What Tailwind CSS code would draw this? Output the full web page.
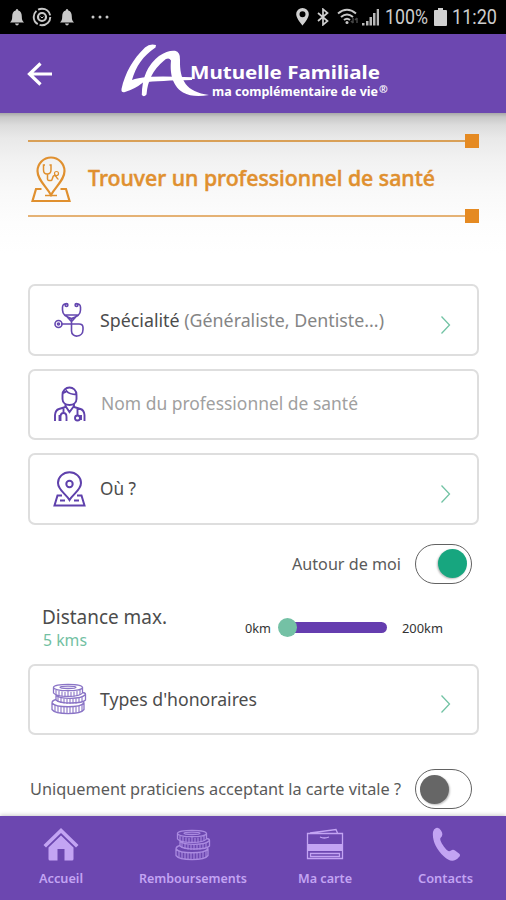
<!DOCTYPE html>
<html lang="fr">
<head>
<meta charset="utf-8">
<title>La Mutuelle Familiale</title>
<script src="https://cdn.jsdelivr.net/npm/@tailwindcss/browser@4"></script>
</head>
<body class="bg-white">
<svg class="hidden">
  <symbol id="coins" viewBox="0 0 36 32">
    <g fill="none" stroke="currentColor" stroke-width="1.300">
      <ellipse cx="17" cy="4.500" rx="14.500" ry="3.200"/><ellipse cx="17" cy="4.300" rx="8" ry="1.200"/>
      <path d="M2.500 4.500v5.500c3 4.500 26 4.500 29 0v-5.500M5 12v5c4 4 26 4 29.500 0v-5.500q0-1.800-3-2M5 12.500c5 4 25 4 29.500-1M1 20v6.500c4 5.500 28 5.500 32 0v-6.500M1 20c4 5 28 5 32 0M1 20q0-2.500 4-3.500M33 20q0-1.500-1.500-2"/>
      <path stroke-width="1.100" d="M5 7v5M8 8v5M11 8.500v5M14 9v5M17 8v5.500M20 9v5M23 8.500v5M26 8v5M29 7v5M7 14v5M10 15v5M13 15.500v5M16 16v5M19 16v5M22 15.500v5M25 15.500v5M28 15v5M31 14v5M4 22v6M7 23v6M10 24v6M13 24v6M16 24v6M19 24v6M22 24v6M25 24v5.500M28 23v6M31 22v6"/>
    </g>
  </symbol>
  <symbol id="chev" viewBox="0 0 12 20"><path d="M1.500 1.500l8 8.500-8 8.500" fill="none" stroke="#72c3a4" stroke-width="1.300"/></symbol>
  <symbol id="bell" viewBox="0 0 14 17"><path fill="#c8c8c8" d="M7 0q1.300 0 1.300 1.500C11 2.300 11.800 4.500 11.800 7.500c0 3 .5 4.500 2.200 6H0c1.700-1.500 2.200-3 2.200-6 0-3 .8-5.200 3.500-6Q5.700 0 7 0zM5 14.500h4q-.5 2-2 2t-2-2z"/></symbol>
</svg>
<div class="flex h-[900px] w-[506px] flex-col overflow-hidden bg-white font-['Noto_Sans',sans-serif] text-[#4c4c4c]">

  <div class="flex h-[34px] shrink-0 items-center bg-black pl-[10px] pr-[8px] text-[#cdcdcd]">
    <svg class="h-[17px] w-[14px]"><use href="#bell"/></svg>
    <svg class="ml-[8px] h-[20px] w-[20px]" viewBox="0 0 20 20" fill="none" stroke="#c8c8c8"><circle cx="10" cy="10" r="8.300" stroke-width="1.900" stroke-dasharray="15.400 2"/><circle cx="10" cy="10" r="4" stroke-width="2.200"/><path d="M8.500 9.500l1.500 1.500 1.500-1.500" stroke-width="1"/></svg>
    <svg class="ml-[8px] h-[17px] w-[14px]"><use href="#bell"/></svg>
    <svg class="ml-[17px] h-[4px] w-[18px]" fill="#c8c8c8"><circle cx="2" cy="2" r="1.500"/><circle cx="9" cy="2" r="1.500"/><circle cx="16" cy="2" r="1.500"/></svg>
    <svg class="ml-auto h-[18px] w-[13px]" viewBox="0 0 13 18"><path fill="#d0d0d0" fill-rule="evenodd" d="M6.500 0a6.300 6.300 0 0 1 6.300 6.300C12.800 10.500 6.500 17.500 6.500 17.500S.2 10.500.2 6.300A6.300 6.300 0 0 1 6.500 0zm0 3.300a3 3 0 1 0 0 6 3 3 0 0 0 0-6z"/></svg>
    <svg class="ml-[8px] h-[18px] w-[12px]" viewBox="0 0 12 18" fill="none" stroke="#d0d0d0" stroke-width="1.700"><path d="M1 5l9.500 8L6 16.800V1.200L10.500 5 1 13"/></svg>
    <svg class="ml-[8px] h-[18px] w-[23px]" viewBox="0 0 23 18" fill="none" stroke="#c8c8c8" stroke-width="2"><path d="M1 5.500q9-7.500 18 0M4 9q6-5 12 0M7 12q3-2.500 6 0"/><circle cx="10" cy="14.500" r="1.500" fill="#c8c8c8" stroke="none"/><path stroke="#444" stroke-width="1.500" d="M16 10v5M20 10v5M14 13l2 2M18 12l2-2"/></svg>
    <svg class="ml-[2px] h-[18px] w-[18px]" viewBox="0 0 18 18" fill="#b8b8b8"><path d="M0 15h2.500v2.500H0zM4 13h2.500v4.500H4zM7.500 9h2.500v8.500H7.500zM11 5h2.500v12.500H11zM14.700 1h2.300v16.500h-2.300z"/></svg>
    <svg class="ml-[5px] h-[26px] w-[44px] overflow-visible"><text x="0" y="20" font-family="Roboto, sans-serif" font-size="20" fill="#cdcdcd" textLength="43" lengthAdjust="spacingAndGlyphs">100%</text></svg>
    <svg class="ml-[5px] h-[18px] w-[13px]" viewBox="0 0 13 18"><path fill="#d0d0d0" d="M4 0h5v2h3q1 0 1 1v14q0 1-1 1H1q-1 0-1-1V3q0-1 1-1h3z"/></svg>
    <svg class="ml-[5px] h-[26px] w-[46px] overflow-visible"><text x="0" y="20" font-family="Roboto, sans-serif" font-size="20" fill="#cdcdcd" textLength="45" lengthAdjust="spacingAndGlyphs">11:20</text></svg>
  </div>

  <header class="flex h-[79px] shrink-0 bg-[#6c47b0] pl-[27px]">
    <svg class="mt-[28px] h-[24px] w-[26px]" viewBox="0 0 26 24" fill="none" stroke="#fff" stroke-width="3.200"><path d="M25 12H3M13.500 1.500L2.500 12l11 10.500"/></svg>
    <svg class="ml-[57px] mt-[1px] h-[75px] w-[290px] overflow-visible" viewBox="0 0 290 75" fill="#fff">
      <path d="M46 10Q40 8 35 12.500C23 24 15 38 11.500 54Q11 58 15 57Q25 54 33 47.500Q50 45.500 82 45L82 42.200Q50 41 38 42Q27 43 22 45C26 31 33 21 45.500 12.500Z"/>
      <path d="M31.800 60Q32 34 49 21Q58 15 65 15.800Q70.500 17 70 25C69.500 45 76 57 99 60Q83 63 73 57.500C61 50 60 36 61 25.500Q58.500 21.500 53.500 26Q38 39 36.500 59.500Q34 62.500 31.800 60Z"/>
      <text x="80" y="44" font-family="'Noto Sans', sans-serif" font-weight="700" font-size="18" textLength="190" lengthAdjust="spacingAndGlyphs">Mutuelle Familiale</text>
      <text x="102" y="60.500" font-family="'Noto Sans', sans-serif" font-weight="700" font-size="12" textLength="166" lengthAdjust="spacingAndGlyphs">ma complémentaire de vie</text>
      <text x="269" y="58" font-family="'Noto Sans', sans-serif" font-weight="700" font-size="10.500">®</text>
    </svg>
  </header>

  <main class="flex h-[703px] shrink-0 flex-col bg-[linear-gradient(to_bottom,#a8a8a8_0px,#c8c8c8_4px,#dcdcdc_12px,#e9e9e9_25px,#f2f2f2_48px,#f9f9f9_80px,#fdfdfd_110px,#fff_140px)] px-[28px]">
    <section class="mt-[20px] w-[451px]">
      <div class="flex h-[16px] items-center"><i class="h-[2px] grow bg-[#d9a057]"></i><i class="h-[14px] w-[14px] bg-[#e58a22]"></i></div>
      <div class="flex h-[59px] items-center">
        <svg class="ml-[3px] mt-[2px] h-[47px] w-[40px]" viewBox="0 0 40 47" fill="none" stroke="#e0902f" stroke-width="2.200">
          <path d="M20 39C15 30 6.500 24 6.500 15a13.500 13.500 0 0 1 27 0C33.500 24 25 30 20 39zM10.500 33H5L1.500 45h37L35 33h-5.500"/>
          <path stroke-width="1.500" d="M14 9h-1.500v5q0 4 3.700 4t3.800-4V9h-1.500M16.500 18v5q0 2 3.500 1.500c2 0 1-5 3.500-5s2 4 4 3.500M14 39.500h12"/><circle cx="25.500" cy="17.500" r="2" stroke-width="1.200"/>
        </svg>
        <h1 class="ml-[17px] mt-[1px]"><svg class="block h-[34px] w-[350px] overflow-visible"><text x="0" y="24" font-family="'Noto Sans', sans-serif" font-size="22" font-weight="500" fill="#e0902f" stroke="#e0902f" stroke-width=".5" textLength="347" lengthAdjust="spacingAndGlyphs">Trouver un professionnel de santé</text></svg></h1>
      </div>
      <div class="flex h-[15px] items-center"><i class="h-[2px] grow bg-[#e5b275]"></i><i class="h-[14px] w-[14px] bg-[#e58a22]"></i></div>
    </section>

    <div class="mt-[61px] flex w-[451px] flex-col gap-[13px]">
      <div class="flex h-[71.500px] items-center rounded-[7px] border-2 border-[#dedede] bg-white pl-[24px] pr-[25px]">
        <svg class="h-[36px] w-[32px]" viewBox="0 0 32 36" fill="none" stroke="#6548b0" stroke-width="1.600"><path d="M12.500 2.500Q9 1 8.500 5v3q0 6 9 8.500 9-2.500 9-8.500V5q-.5-4-4-2.500M11.500 13h12l-6 6.500zM17.500 16v13c0 7 11.500 7 11.500-1.500v-2Q29 22 25 22H7"/><circle cx="12.500" cy="3" r="1.400"/><circle cx="22.500" cy="3" r="1.400"/><circle cx="4.500" cy="22" r="3.500"/><circle cx="4.500" cy="22" r="1"/></svg>
        <svg class="ml-[14px] h-[28px] w-[290px] overflow-visible"><text x="0" y="21" font-family="'Noto Sans', sans-serif" font-size="18" fill="#4c4c4c" textLength="284" lengthAdjust="spacingAndGlyphs">Spécialité <tspan fill="#858585">(Généraliste, Dentiste...)</tspan></text></svg>
        <svg class="ml-auto mt-[10px] h-[20px] w-[12px]"><use href="#chev"/></svg>
      </div>
      <div class="flex h-[71.500px] items-center rounded-[7px] border-2 border-[#dedede] bg-white pl-[24px] pr-[25px]">
        <svg class="h-[36px] w-[32px]" viewBox="0 0 32 36" fill="none" stroke="#5f41ac" stroke-width="1.900"><path d="M8.500 9c0-10 14-10 14 0v4c0 8-14 8-14 0zM9 7q3-1 3.500-2 3 3.500 10 3.500M11.500 18v3L5 23q-3.500 1-4 6v6M20 18v3l6.500 2q3.500 1 4 6v6M11.500 20l4 6 4.500-6M6.500 35v-4q0-4 3-4t3 4v4M9.500 27v-5M23.500 22v7M5.500 29v6"/><circle cx="23.500" cy="32" r="2.500"/><path d="M27 29v5"/></svg>
        <svg class="ml-[14px] h-[28px] w-[290px] overflow-visible"><text x="1" y="20" font-family="'Noto Sans', sans-serif" font-size="18" fill="#a0a0a0" textLength="257" lengthAdjust="spacingAndGlyphs">Nom du professionnel de santé</text></svg>
      </div>
      <div class="flex h-[71.500px] items-center rounded-[7px] border-2 border-[#dedede] bg-white pl-[23px] pr-[25px]">
        <svg class="h-[36px] w-[33px]" viewBox="0 0 33 36" fill="none" stroke="#5f41ac" stroke-width="2"><path d="M16.500 29C13 23 5 19 5 12a11.500 10.800 0 0 1 23 0c0 7-8 11-11.500 17zM9 24.500H4.500L1.500 34.500h30l-3-10H24M7 29.500h5M21 29.500h5"/><circle cx="16.500" cy="13" r="3.200"/></svg>
        <svg class="ml-[14px] h-[28px] w-[290px] overflow-visible"><text x="0" y="20" font-family="'Noto Sans', sans-serif" font-size="18" fill="#4c4c4c" textLength="36" lengthAdjust="spacingAndGlyphs">Où ?</text></svg>
        <svg class="ml-auto mt-[10px] h-[20px] w-[12px]"><use href="#chev"/></svg>
      </div>
    </div>

    <div class="mt-[19px] flex h-[40px] w-[444px] items-center justify-end gap-[13px]">
      <svg class="h-[26px] w-[110px] overflow-visible"><text x="0" y="19" font-family="'Noto Sans', sans-serif" font-size="16.500" fill="#5a5a5a" textLength="109" lengthAdjust="spacingAndGlyphs">Autour de moi</text></svg>
      <div class="flex h-[40px] w-[57px] items-center justify-end rounded-full border border-[#626262] bg-white pr-[4px]"><i class="h-[29px] w-[29px] rounded-full bg-[#17a67f] shadow-[-1px_1px_2px_#bbb]"></i></div>
    </div>

    <div class="mt-[19px] flex h-[50px] items-center pl-[14px]">
      <svg class="h-[50px] w-[130px] overflow-visible" font-family="'Noto Sans', sans-serif"><text x="0" y="20.500" font-size="19" fill="#4c4c4c" textLength="125" lengthAdjust="spacingAndGlyphs">Distance max.</text><text x="1" y="43" font-size="16.500" fill="#72bfa2" textLength="44" lengthAdjust="spacingAndGlyphs">5 kms</text></svg>
      <svg class="ml-[73px] h-[20px] w-[27px] overflow-visible"><text x="0" y="14.500" font-family="'Noto Sans', sans-serif" font-size="13" fill="#333" textLength="26" lengthAdjust="spacingAndGlyphs">0km</text></svg>
      <div class="ml-[6px] flex h-[19px] w-[110px] items-center"><i class="z-10 h-[19px] w-[19px] shrink-0 rounded-full bg-[#74c1a5]"></i><i class="-ml-[5px] h-[11px] w-[95px] rounded-r-full bg-[#653daf]"></i></div>
      <svg class="ml-[14px] h-[20px] w-[44px] overflow-visible"><text x="0" y="14.500" font-family="'Noto Sans', sans-serif" font-size="13" fill="#333" textLength="41" lengthAdjust="spacingAndGlyphs">200km</text></svg>
    </div>

    <div class="mt-[11px] flex h-[71.500px] w-[451px] shrink-0 items-center rounded-[7px] border-2 border-[#dedede] bg-white pl-[21px] pr-[25px]">
      <svg class="h-[32px] w-[36px] text-[#8a74c6]"><use href="#coins"/></svg>
      <svg class="ml-[13px] h-[28px] w-[290px] overflow-visible"><text x="0" y="21" font-family="'Noto Sans', sans-serif" font-size="18" fill="#4c4c4c" textLength="157" lengthAdjust="spacingAndGlyphs">Types d'honoraires</text></svg>
      <svg class="ml-auto mt-[10px] h-[20px] w-[12px]"><use href="#chev"/></svg>
    </div>

    <div class="mt-[34px] flex h-[40px] w-[444px] shrink-0 items-center justify-between pl-[2px]">
      <svg class="h-[26px] w-[374px] overflow-visible"><text x="0" y="19" font-family="'Noto Sans', sans-serif" font-size="16.500" fill="#5a5a5a" textLength="371" lengthAdjust="spacingAndGlyphs">Uniquement praticiens acceptant la carte vitale ?</text></svg>
      <div class="flex h-[40px] w-[57px] items-center rounded-full border border-[#626262] bg-white pl-[4px]"><i class="h-[29px] w-[29px] rounded-full bg-[#666] shadow-[1px_1px_2px_#bbb]"></i></div>
    </div>
  </main>

  <nav class="grid h-[84px] shrink-0 grid-cols-[122px_142px_122px_120px] bg-[#6c47b0] pt-[11px] text-[#c3a4f3] shadow-[0_-1px_4px_#ccc]">
    <div class="flex flex-col items-center"><svg class="h-[36px] w-[36px]" viewBox="0 0 36 36" fill="currentColor"><path d="M18 1l17.500 17-2.500 2.500L18 6 3 20.500.5 18z"/><path d="M18 8.500L30.500 20.500V32q0 1.500-1.500 1.500h-7.500V22h-7v11.500H7q-1.500 0-1.500-1.500V20.500z"/></svg>
      <svg class="mt-[5px] h-[20px] w-[45px] overflow-visible"><text x="0" y="15" font-family="'Noto Sans', sans-serif" font-size="13" font-weight="600" fill="currentColor" textLength="44" lengthAdjust="spacingAndGlyphs">Accueil</text></svg></div>
    <div class="flex flex-col items-center"><svg class="mt-[2px] h-[32px] w-[36px] text-[#ab8be1]"><use href="#coins"/></svg>
      <svg class="mt-[7px] h-[20px] w-[109px] overflow-visible"><text x="0" y="15" font-family="'Noto Sans', sans-serif" font-size="13" font-weight="600" fill="currentColor" textLength="108" lengthAdjust="spacingAndGlyphs">Remboursements</text></svg></div>
    <div class="flex flex-col items-center"><svg class="h-[36px] w-[38px]" viewBox="0 0 38 36" fill="none" stroke="currentColor" stroke-width="1.300"><path d="M1.500 6.500h35v25h-35zM4 6l26-3.500 1.500 3.500M14 10q4 2 9 0"/><path fill="currentColor" stroke="none" d="M1.500 17h35v7h-35z"/><path d="M4.500 26.500h29v3h-29z"/></svg>
      <svg class="mt-[5px] h-[20px] w-[55px] overflow-visible"><text x="0" y="15" font-family="'Noto Sans', sans-serif" font-size="13" font-weight="600" fill="currentColor" textLength="54" lengthAdjust="spacingAndGlyphs">Ma carte</text></svg></div>
    <div class="flex flex-col items-center"><svg class="h-[36px] w-[28px]" viewBox="0 0 28 36" fill="currentColor"><path d="M4 1Q7 0 9 3.500q3 4.500-.5 7.500c-1.500 2 3.500 9.500 7 12.500q1.500 1.500 3.500 0 2-1.500 4 0l4 3q2 1.500 0 3.500c-4.500 5.500-10 4.500-15-.5C4 22 0 13 1 5q.5-3 3-4z"/></svg>
      <svg class="mt-[5px] h-[20px] w-[56px] overflow-visible"><text x="0" y="15" font-family="'Noto Sans', sans-serif" font-size="13" font-weight="600" fill="currentColor" textLength="55" lengthAdjust="spacingAndGlyphs">Contacts</text></svg></div>
  </nav>
</div>
</body>
</html>
